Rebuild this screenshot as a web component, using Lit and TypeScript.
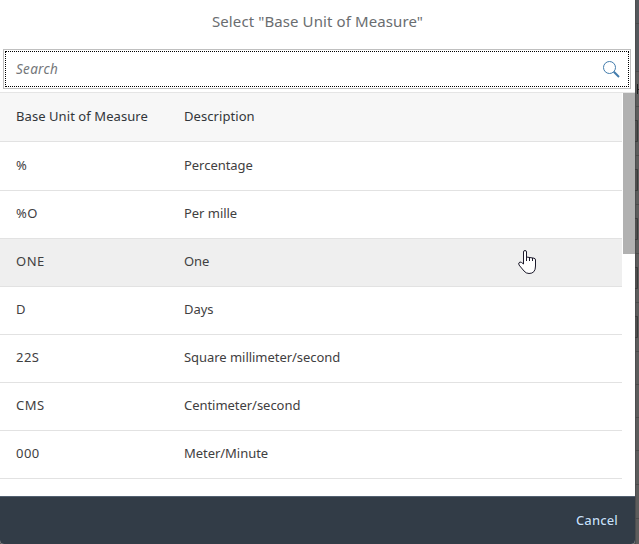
import { LitElement, html, css } from "lit";
import { customElement } from "lit/decorators.js";

interface Unit { code: string; text: string; hover?: boolean }

const UNITS: Unit[] = [
  { code: "%", text: "Percentage" },
  { code: "%O", text: "Per mille" },
  { code: "ONE", text: "One", hover: true },
  { code: "D", text: "Days" },
  { code: "22S", text: "Square millimeter/second" },
  { code: "CMS", text: "Centimeter/second" },
  { code: "000", text: "Meter/Minute" },
];

@customElement("app-root")
export class AppRoot extends LitElement {
  static styles = css`
    :host { display: flex; position: relative; width: 639px; height: 544px; overflow: hidden; background: #5c5c5c; font: 13px/18px "Noto Sans", sans-serif; color: #3f4041; }
    * { box-sizing: border-box; }
    .dialog { width: 635px; height: 544px; flex: none; display: flex; flex-direction: column; background: #fff; border-radius: 0 0 4px 4px; overflow: hidden; }
    .title { height: 49px; padding-top: 11px; text-align: center; font-size: 15px; line-height: 20px; color: #6a6d70; font-weight: 400; margin: 0; letter-spacing: 0.1px; }
    .search { height: 40px; margin: 0 4px 0 3px; border: 1px solid #bfbfbf; padding: 1px; flex: none; }
    .focus { height: 100%; border: 1px dotted #000; display: flex; align-items: center; justify-content: space-between; padding: 0 8px 0 10px; font-size: 13.5px; letter-spacing: 0.3px; font-style: italic; color: #74777a; }
    .body { flex: 1; display: flex; margin-top: 3px; border-top: 1px solid #e5e5e5; overflow: hidden; }
    .table { width: 622px; }
    .row { display: flex; height: 48px; padding: 13px 16px 0; border-bottom: 1px solid #e2e2e2; letter-spacing: -0.04px; }
    .head { background: #f7f7f7; height: 49px; padding-top: 14px; color: #32363a; }
    .first { height: 49px; padding-top: 14px; }
    .hover { background: #efefef; }
    .code { width: 168px; letter-spacing: 0.5px; }
    .head span { letter-spacing: 0.07px; }
    .thumb { width: 12px; height: 161px; margin-left: 1px; background: #b1b1b1; }
    .footer { height: 48px; flex: none; background: #323c47; border-top: 1px solid #526070; display: flex; justify-content: flex-end; padding: 14px 17px 0 0; color: #c7dff5; font-weight: 500; letter-spacing: 0.15px; text-shadow: 0 0 1px #10202c; }
    .hand { position: absolute; left: 518px; top: 249px; }
    .backdrop { flex: none; }
  `;
  render() {
    return html`
      <div class="dialog">
        <h1 class="title"><span>Select "Base Unit of Measure"</span></h1>
        <div class="search"><div class="focus"><span>Search</span>
          <svg width="18" height="18" viewBox="0 0 18 18" fill="none" stroke="#427cac"><circle cx="7.500" cy="7.500" r="6" /><path d="M11.800 11.800L17 17" stroke-width="2" /></svg>
        </div></div>
        <div class="body">
          <div class="table">
            <div class="row head"><span class="code">Base Unit of Measure</span><span>Description</span></div>
            ${UNITS.map((u, i) => html`<div class="row ${i === 0 ? "first" : ""} ${u.hover ? "hover" : ""}"><span class="code">${u.code}</span><span>${u.text}</span></div>`)}
          </div>
          <div class="thumb"></div>
        </div>
        <div class="footer">Cancel</div>
      </div>
      <svg class="backdrop" width="4" height="544" viewBox="0 0 4 544">
        <path d="M0 0H4V71H0Z" fill="#54585c" />
        <path d="M0 0H1V544H0Z" fill="#4c4d4e" />
        <path d="M0 23.500H4M0 71.500H4M0 106.500H4M0 155.500H4M0 204.500H4M0 253.500H4M0 302.500H4M0 351.500H4M0 384.500H4M0 417.500H4M0 450.500H4M0 484.500H4M0 518.500H4" stroke="#4b4b4b" />
        <path d="M0 120.500H2.500V141.500H0M0 169.500H2.500V190.500H0M0 218.500H2.500V239.500H0M0 267.500H2.500V288.500H0M0 316.500H2.500V337.500H0" fill="#4e4e4e" stroke="#3b3b3b" />
        <path d="M2.500 84V94M3 90L4 89" stroke="#1d1e20" />
      </svg>
      <svg class="hand" width="19" height="26" viewBox="0 0 19 26"><path d="M5.500 15V3Q5.500 1.500 7 1.500T8.500 3V8L16 9.200Q17.500 9.500 17.500 11V17Q17.500 24.500 11 24.500Q8 24.500 6 22L1 16Q0 13.500 2 13Q3.500 13 5.500 15M8.500 8V12M11.500 8.500V12M14.500 9V12" fill="#fff" stroke="#1c1a2b" /></svg>
    `;
  }
}
